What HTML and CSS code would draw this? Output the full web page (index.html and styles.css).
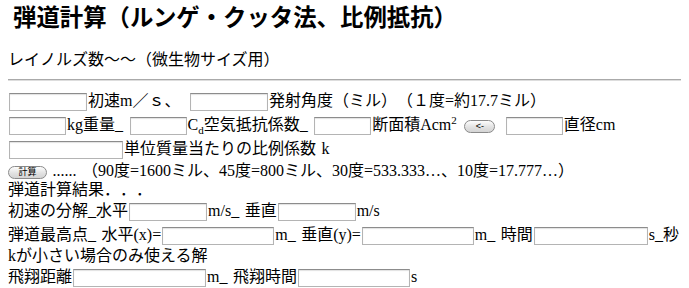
FILE: index.html
```html
<!DOCTYPE html>
<html lang="ja">
<head>
  <meta charset="UTF-8" />
  <title>弾道計算（ルンゲ・クッタ法、比例抵抗）</title>
  <link rel="stylesheet" href="styles.css">
</head>
<body>

  <h2 class="title">弾道計算（ルンゲ・クッタ法、比例抵抗）</h2>
  <p class="sub">レイノルズ数〜〜（微生物サイズ用）</p>
  <hr>

  <form name="calc">
    <div class="row r1">
      <input type="text" class="w78" name="v0">初速m／ｓ、
      <input type="text" class="w78 gap" name="angle">発射角度（ミル）（１度=約17.7ミル）
    </div>
    <div class="row r2">
      <input type="text" class="w57" name="mass">kg重量_
      <input type="text" class="w57" name="cd">C<sub>d</sub>空気抵抗係数_
      <input type="text" class="w57" name="area">断面積Acm<sup>2</sup>
      <button type="button" class="mini arrow">&lt;-</button>
      <input type="text" class="w57" name="dia">直径cm
    </div>
    <div class="row r3">
      <input type="text" class="w114" name="k">単位質量当たりの比例係数 k
    </div>
    <div class="row r4">
      <button type="button" class="mini calc">計算</button>
      ...... （90度=1600ミル、45度=800ミル、30度=533.333…、10度=17.777…）
    </div>
    <div class="row r5">弾道計算結果．．．</div>
    <div class="row r6">
      初速の分解_水平<input type="text" class="w78" name="vx">m/s_ 垂直<input type="text" class="w78" name="vy">m/s
    </div>
    <div class="row r7">
      弾道最高点_ 水平(x)=<input type="text" class="w112" name="hx">m_ 垂直(y)=<input type="text" class="w112" name="hy">m_ 時間<input type="text" class="w114" name="ht">s_秒
    </div>
    <div class="row r8">kが小さい場合のみ使える解</div>
    <div class="row r9">
      飛翔距離<input type="text" class="w133" name="dist">m_ 飛翔時間<input type="text" class="w112" name="time">s
    </div>
  </form>

</body>
</html>
```

FILE: styles.css
```css
body {
  margin: 0 8px;
  font-family: "Liberation Serif", "Noto Sans CJK JP", serif;
  font-size: 16px;
  color: #000;
  background: #fff;
  text-spacing-trim: space-all;
  word-spacing: 1.5px;
}
.title {
  margin: 0;
  padding-left: 5px;
  font-size: 23.4px;
  line-height: 36px;
  font-weight: bold;
}
.sub {
  margin: 14px 0 0;
  line-height: 20px;
}
hr {
  margin: 9px -4px 0 0;
  border: 0;
  border-top: 1px solid #aaa;
  border-bottom: 1px solid #ddd;
}
form {
  margin-top: 8px;
}
.row {
  white-space: nowrap;
}
.r1 { height: 24px; line-height: 24px; }
.r2 { height: 24px; line-height: 24px; }
.r3 { height: 24px; line-height: 24px; }
.r4 { height: 20px; line-height: 20px; }
.r5 { height: 18px; line-height: 18px; }
.r6 { height: 24px; line-height: 24px; }
.r7 { height: 23px; line-height: 23px; }
.r8 { height: 20px; line-height: 20px; }
.r9 { height: 22px; line-height: 22px; }

input {
  box-sizing: border-box;
  height: 18px;
  margin: 0 1px;
  padding: 0 2px;
  vertical-align: middle;
  border: 1px solid #b4b4b4;
  border-top-color: #8c8c8c;
  box-shadow: inset 0 1px 1px rgba(0, 0, 0, 0.12);
  background: #fff;
  font-size: 13px;
}
.gap { margin-left: 4px; }
.w57 { width: 57px; }
.w78 { width: 78px; }
.w112 { width: 112px; }
.w114 { width: 114px; }
.w133 { width: 133px; }

sub, sup {
  font-size: 11px;
  line-height: 0;
}

.mini {
  box-sizing: border-box;
  height: 13px;
  padding: 0;
  vertical-align: middle;
  border: 1px solid #8a8a8a;
  border-radius: 7px;
  background: linear-gradient(#fdfdfd, #e2e2e2 55%, #d4d4d4);
  font-family: "Liberation Sans", "Noto Sans CJK JP", sans-serif;
  font-size: 9px;
  line-height: 11px;
  color: #000;
}
.arrow {
  width: 31px;
  margin: 0 4px 0 2px;
}
.calc {
  width: 39px;
}
```
